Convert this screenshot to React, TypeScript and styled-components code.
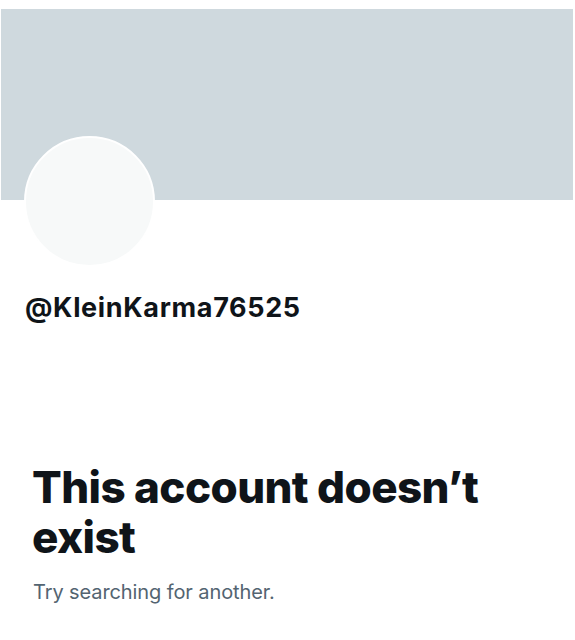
import React from "react";
import styled, { createGlobalStyle } from "styled-components";

const Global = createGlobalStyle`
  html, body { margin: 0; padding: 0; background: #ffffff; }
  body { font-family: Inter, "Liberation Sans", Arial, sans-serif; }
`;

const Page = styled.div`
  width: 575px;
  height: 640px;
  display: flex;
  flex-direction: column;
  background: #ffffff;
  overflow: hidden;
`;

const Banner = styled.div`
  margin: 9px 2px 0 1px;
  height: 191px;
  background: #cfd9de;
`;

const Avatar = styled.div`
  width: 127px;
  height: 127px;
  margin: -64px 0 0 24px;
  border-radius: 50%;
  background: #f7f9f9;
  border: 2px solid #ffffff;
`;

const Handle = styled.div`
  margin: 24px 0 0 25px;
  font-size: 27px;
  font-weight: 700;
  color: #0f1419;
  letter-spacing: 0.65px;
`;

const Headline = styled.h1`
  margin: 138px 0 0 32px;
  font-size: 44px;
  line-height: 50px;
  font-weight: 800;
  color: #0f1419;
  letter-spacing: -0.6px;
`;

const Sub = styled.p`
  margin: 18px 0 0 33px;
  font-size: 20px;
  font-weight: 400;
  color: #536471;
  letter-spacing: -0.1px;
`;

export default function App() {
  return (
    <>
      <Global />
      <Page>
        <Banner />
        <Avatar />
        <Handle>@KleinKarma76525</Handle>
        <Headline>
          This account doesn’t
          <br />
          exist
        </Headline>
        <Sub>Try searching for another.</Sub>
      </Page>
    </>
  );
}
